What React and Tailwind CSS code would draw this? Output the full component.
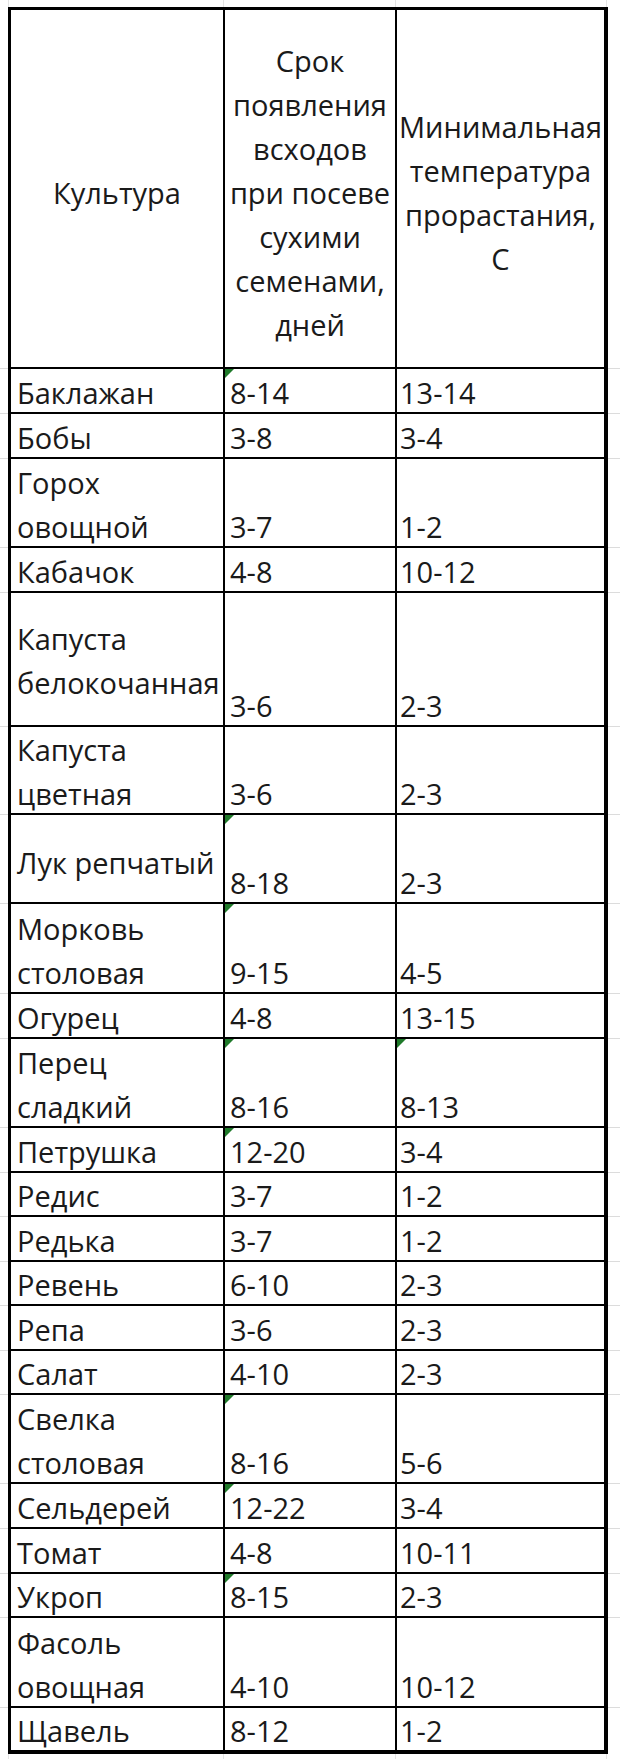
import React from "react";

const rows = [
  { h: 45, name: ["Баклажан"], a: "8-14", b: "13-14", ta: true },
  { h: 45, name: ["Бобы"], a: "3-8", b: "3-4" },
  { h: 89, name: ["Горох", "овощной"], a: "3-7", b: "1-2" },
  { h: 45, name: ["Кабачок"], a: "4-8", b: "10-12" },
  { h: 134, name: ["Капуста", "белокочанная"], a: "3-6", b: "2-3", pb: "big" },
  { h: 88, name: ["Капуста", "цветная"], a: "3-6", b: "2-3" },
  { h: 89, name: ["Лук репчатый"], a: "8-18", b: "2-3", pb: "mid", ta: true },
  { h: 90, name: ["Морковь", "столовая"], a: "9-15", b: "4-5", ta: true },
  { h: 45, name: ["Огурец"], a: "4-8", b: "13-15" },
  { h: 89, name: ["Перец", "сладкий"], a: "8-16", b: "8-13", ta: true, tb: true },
  { h: 45, name: ["Петрушка"], a: "12-20", b: "3-4", ta: true },
  { h: 44, name: ["Редис"], a: "3-7", b: "1-2" },
  { h: 45, name: ["Редька"], a: "3-7", b: "1-2" },
  { h: 44, name: ["Ревень"], a: "6-10", b: "2-3" },
  { h: 45, name: ["Репа"], a: "3-6", b: "2-3" },
  { h: 44, name: ["Салат"], a: "4-10", b: "2-3" },
  { h: 89, name: ["Свелка", "столовая"], a: "8-16", b: "5-6", ta: true },
  { h: 45, name: ["Сельдерей"], a: "12-22", b: "3-4", ta: true },
  { h: 45, name: ["Томат"], a: "4-8", b: "10-11" },
  { h: 44, name: ["Укроп"], a: "8-15", b: "2-3", ta: true },
  { h: 90, name: ["Фасоль", "овощная"], a: "4-10", b: "10-12" },
  { h: 42, name: ["Щавель"], a: "8-12", b: "1-2", last: true },
];

function Tri() {
  return (
    <svg className="absolute left-0 top-0" width="9" height="9" viewBox="0 0 9 9">
      <polygon points="0,0 9,0 0,9" fill="#1f7a2a" />
    </svg>
  );
}

function Lines({ lines, extra = "-mb-[3px]" }) {
  return (
    <div className={"leading-[44px] whitespace-nowrap " + extra}>
      {lines.map((l, i) => (
        <div key={i}>{l}</div>
      ))}
    </div>
  );
}

function GrayCol({ w }) {
  return (
    <div className={"flex flex-col " + w}>
      <div className="h-[3px]" />
      <div className="h-[359px] border-b border-[#dcdcdc] box-border" />
      {rows.map((r, i) => (
        <div
          key={i}
          style={{ height: r.h }}
          className={r.last ? "" : "border-b border-[#dcdcdc] box-border"}
        />
      ))}
    </div>
  );
}

export default function App() {
  return (
    <div
      className="w-[620px] h-[1759px] bg-white text-[#1a1a1a] text-[29px] flex flex-col overflow-hidden"
      style={{ fontFamily: '"Open Sans", "Liberation Sans", sans-serif' }}
    >
      <div className="h-[7px] flex">
        <div className="w-[9px] border-r border-[#e4e4e4]" />
        <div className="w-[215px] border-r border-[#e4e4e4]" />
        <div className="w-[172px] border-r border-[#e4e4e4]" />
        <div className="w-[211px] border-r border-[#e4e4e4]" />
      </div>
      <div className="flex">
        <GrayCol w="w-[8px]" />
        <div className="w-[600px] border-[3px] border-r-4 border-b-4 border-black flex flex-col">
          <div className="h-[359px] border-b-2 border-black flex">
            <div className="w-[214px] border-r-2 border-black flex flex-col items-center justify-center pt-[8px]">
              <Lines lines={["Культура"]} extra="text-center" />
            </div>
            <div className="w-[172px] border-r-2 border-black flex flex-col items-center justify-center pt-[8px]">
              <Lines
                lines={["Срок", "появления", "всходов", "при посеве", "сухими", "семенами,", "дней"]}
                extra="text-center"
              />
            </div>
            <div className="flex-1 flex flex-col items-center justify-center pt-[8px]">
              <Lines
                lines={["Минимальная", "температура", "прорастания,", "С"]}
                extra="text-center"
              />
            </div>
          </div>
          {rows.map((r, i) => (
            <div
              key={i}
              style={{ height: r.h }}
              className={"flex " + (r.last ? "" : "border-b-2 border-black")}
            >
              <div className="w-[214px] border-r-2 border-black flex flex-col justify-end pl-[6px]">
                <Lines
                  lines={r.name}
                  extra={r.pb === "big" ? "pb-[20px]" : r.pb === "mid" ? "pb-[17px]" : "-mb-[3px]"}
                />
              </div>
              <div className="relative w-[172px] border-r-2 border-black flex flex-col justify-end pl-[5px]">
                {r.ta && <Tri />}
                <Lines lines={[r.a]} />
              </div>
              <div className="relative flex-1 flex flex-col justify-end pl-[3px]">
                {r.tb && <Tri />}
                <Lines lines={[r.b]} />
              </div>
            </div>
          ))}
        </div>
        <GrayCol w="flex-1" />
      </div>
      <div className="h-[5px] flex">
        <div className="w-[9px] border-r border-[#e4e4e4]" />
        <div className="w-[215px] border-r border-[#e4e4e4]" />
        <div className="w-[172px] border-r border-[#e4e4e4]" />
        <div className="w-[211px] border-r border-[#e4e4e4]" />
      </div>
    </div>
  );
}
